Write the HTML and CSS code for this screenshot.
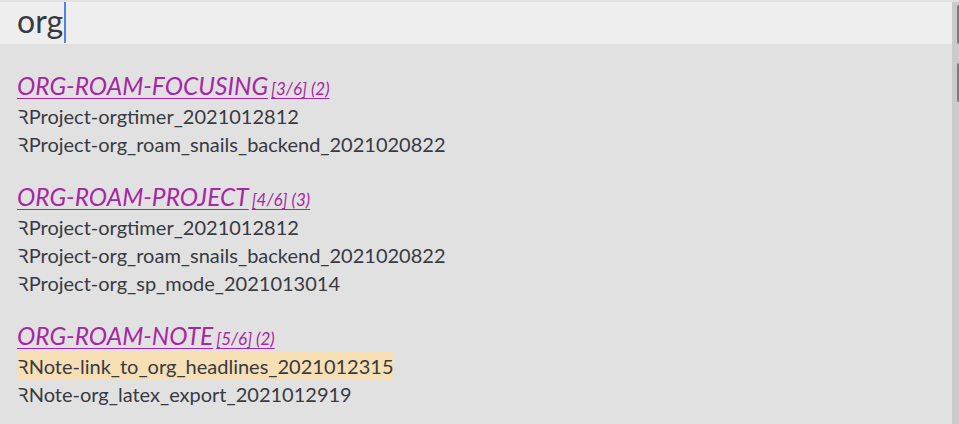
FILE: index.html
```html
<!DOCTYPE html>
<html lang="en">
<head>
  <meta charset="UTF-8">
  <title>org-roam search</title>
  <link rel="stylesheet" href="styles.css">
</head>
<body>
<div class="frame">
  <div class="main">
    <div class="prompt"><span class="query">org</span><span class="caret"></span></div>

    <div class="results">
      <div class="group">
        <div class="group-title">ORG-ROAM-FOCUSING<span class="count">[3/6] (2)</span></div>
        <div class="item">ꝚProject-orgtimer_2021012812</div>
        <div class="item">ꝚProject-org_roam_snails_backend_2021020822</div>
      </div>

      <div class="group">
        <div class="group-title">ORG-ROAM-PROJECT<span class="count">[4/6] (3)</span></div>
        <div class="item">ꝚProject-orgtimer_2021012812</div>
        <div class="item">ꝚProject-org_roam_snails_backend_2021020822</div>
        <div class="item">ꝚProject-org_sp_mode_2021013014</div>
      </div>

      <div class="group">
        <div class="group-title">ORG-ROAM-NOTE<span class="count">[5/6] (2)</span></div>
        <div class="item selected">ꝚNote-link_to_org_headlines_2021012315</div>
        <div class="item">ꝚNote-org_latex_export_2021012919</div>
      </div>
    </div>
  </div>

  <div class="scrollbar">
    <div class="thumb"></div>
    <div class="thumb second"></div>
  </div>
</div>
</body>
</html>
```

FILE: styles.css
```css
html, body {
  margin: 0;
  height: 100%;
}
body {
  font-family: Lato, "Noto Sans", "DejaVu Sans", sans-serif;
  background: #e1e1e1;
  color: #383a42;
  overflow: hidden;
}
.frame {
  display: flex;
  height: 100%;
  padding-top: 2px;
  box-sizing: border-box;
}
.main {
  flex: 1;
}
.prompt {
  height: 42px;
  background: #eeeeee;
  padding-left: 17px;
  display: flex;
  align-items: center;
}
.query {
  font-size: 32px;
  line-height: 42px;
  position: relative;
  top: -2px;
}
.caret {
  width: 2px;
  height: 41px;
  background: #4f84e8;
  margin-left: 1px;
  align-self: flex-start;
}
.results {
  padding-left: 17px;
  padding-top: 3px;
}
.group {
  margin-top: 26px;
}
.group-title {
  font-style: italic;
  font-size: 24.5px;
  line-height: 26px;
  color: #a626a4;
  text-decoration: underline;
  text-decoration-thickness: 1px;
  text-underline-offset: 3px;
}
.count {
  font-size: 17px;
  margin-left: 3px;
}
.item {
  font-size: 20px;
  line-height: 28px;
  width: fit-content;
}
.item.selected {
  background: #f6dfb5;
}
.scrollbar {
  width: 7px;
  background: #cbcbcb;
  display: flex;
  flex-direction: column;
  align-items: flex-end;
  padding-top: 3px;
}
.thumb {
  width: 2px;
  height: 39px;
  background: #7a7a7a;
  border-radius: 2px 0 0 2px;
}
.thumb.second {
  margin-top: 19px;
}
```
